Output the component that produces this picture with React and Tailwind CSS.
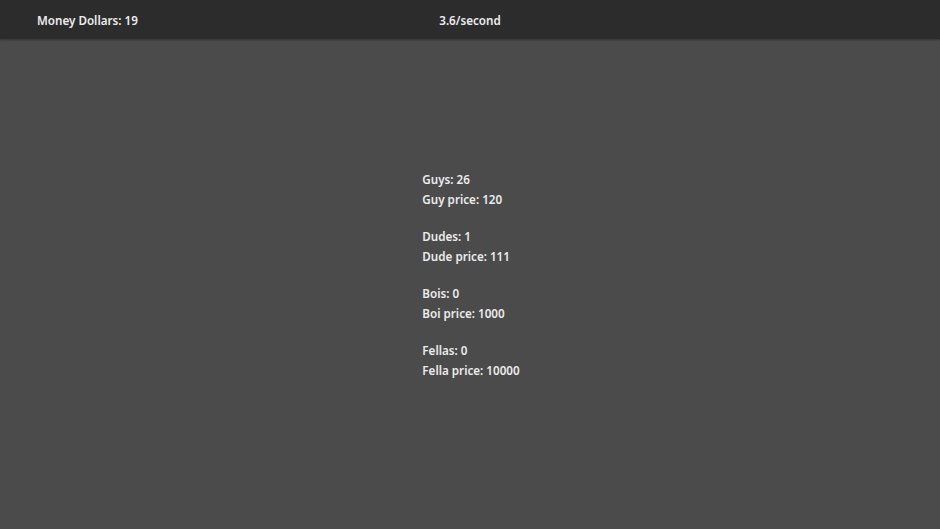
import React from "react";

const groups = [
  ["Guys: 26", "Guy price: 120"],
  ["Dudes: 1", "Dude price: 111"],
  ["Bois: 0", "Boi price: 1000"],
  ["Fellas: 0", "Fella price: 10000"],
];

export default function App() {
  return (
    <div
      className="min-h-[529px] w-full bg-[#4b4b4b] text-[#ececec] font-semibold text-[11.65px]"
      style={{ fontFamily: '"Noto Sans", "Open Sans", sans-serif' }}
    >
      <header className="h-[39px] pt-[3px] bg-[#2c2c2c] shadow-[0_1px_2px_rgba(0,0,0,0.35)] grid grid-cols-3 items-center">
        <div className="pl-[37px]">Money Dollars: 19</div>
        <div className="text-center">3.6/second</div>
        <div />
      </header>
      <main className="flex justify-center pt-[131px] pl-[2px]">
        <div className="flex flex-col gap-[17px]">
          {groups.map((g) => (
            <div key={g[0]} className="flex flex-col leading-[20px]">
              <div>{g[0]}</div>
              <div>{g[1]}</div>
            </div>
          ))}
        </div>
      </main>
    </div>
  );
}
